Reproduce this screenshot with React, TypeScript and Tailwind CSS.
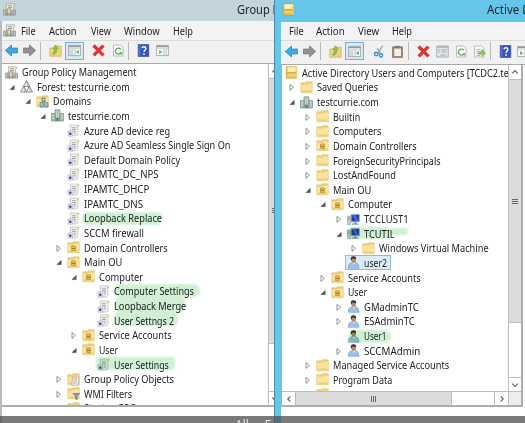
import React, { useLayoutEffect, useRef } from "react";

type Kind =
  | "gpm" | "forest" | "domains" | "domain" | "gpo" | "ou" | "folder" | "gpoFolder" | "wmi"
  | "book" | "pc" | "user";
type Node = {
  label: string;
  w: number;
  icon: Kind;
  depth: number;
  arrow?: "open" | "closed";
  selected?: boolean;
};

/* Condenses a label horizontally to its measured column width. */
function Label({ text, w, cls = "text-[11px]" }: { text: string; w: number; cls?: string }) {
  const ref = useRef<HTMLSpanElement>(null);
  useLayoutEffect(() => {
    const el = ref.current;
    if (el && el.offsetWidth) el.style.transform = `scaleX(${w / el.offsetWidth})`;
  }, [w]);
  return (
    <span className="flex h-[14px] shrink-0 items-center" style={{ width: w }}>
      <span ref={ref} className={"block shrink-0 origin-left whitespace-nowrap leading-[14px] " + cls}>{text}</span>
    </span>
  );
}

const Folder = () => (
  <>
    <path d="M.8 1.8h4.4l1-1h6v10.9H.8z" fill="#ecd07c" stroke="#dfbd65" strokeWidth=".6" />
    <path d="M1.2 3.8h5.4l1-1.1h4.6v8.8h-11z" fill="#f9e39e" />
    <path d="M1.6 10.4h10.2" stroke="#f0cd78" strokeWidth="1.8" />
  </>
);
const Building = () => (
  <>
    <path d="M4 .8h5V12H4z" fill="#a9b9bd" stroke="#7c8f94" strokeWidth=".7" />
    <path d="M.5 4.6H4V12H.5zM9 4.6h3.5V12H9z" fill="#a4c5ab" stroke="#76977f" strokeWidth=".7" />
    <path d="M5 3h1M7 3h1M5 5h1M7 5h1M5 7h1M7 7h1M1.8 6.6h1M10.3 6.6h1M1.8 9h1M10.3 9h1" stroke="#eef7fb" strokeWidth="1" />
    <path d="M5.4 9h2.2v3H5.4z" fill="#4e7c63" />
  </>
);

function Icon({ kind }: { kind: Kind }) {
  return (
    <svg viewBox="0 0 13 13" className="block h-[13px] w-[13px] shrink-0">
      {kind === "folder" && <Folder />}
      {kind === "ou" && (
        <>
          <Folder />
          <path d="M4.6 5h3.8v4.4H4.6z" fill="#f0c84e" stroke="#b08c35" strokeWidth=".8" />
          <path d="M5 7.4h3" stroke="#8d6b22" strokeWidth=".9" />
        </>
      )}
      {kind === "gpoFolder" && (
        <>
          <Folder />
          <path d="M5.5 4h6.6l-.8 8.2H4.8z" fill="#f3f1e6" stroke="#9a9788" strokeWidth=".6" />
          <path d="M6.6 6h3.6M6.5 8h3.4M6.3 10h3" stroke="#8f8f9a" strokeWidth=".7" />
        </>
      )}
      {kind === "wmi" && (
        <>
          <Folder />
          <path d="M6.2 6.5h6.3l-2.4 3v3.2l-1.5-.8V9.5z" fill="#7c9fc9" stroke="#48688f" strokeWidth=".6" />
        </>
      )}
      {kind === "domains" && (
        <>
          <Folder />
          <path d="M6 3h3v4H6z" fill="#90aab9" stroke="#5d7681" strokeWidth=".6" />
          <path d="M4 7.5h3.2v4.7H4zM8.6 7.5h3.4v4.7H8.6z" fill="#8fb7b8" stroke="#567a80" strokeWidth=".6" />
          <path d="M5 9h1M9.8 9h1M7 4.5h1" stroke="#eef7fb" />
        </>
      )}
      {kind === "domain" && <Building />}
      {kind === "forest" && (
        <g fill="#f4f4f4" stroke="#74787b" strokeWidth=".8">
          <path d="M6.5.6L9.6 6.5H3.4z" />
          <path d="M3.7 5.8L6.6 12H.5z" />
          <path d="M9.3 5.8L12.5 12H6.4z" />
          <path d="M6.5 1l1 5.4M3.7 6l1 6M9.3 6l1 6" strokeWidth=".5" />
        </g>
      )}
      {kind === "gpo" && (
        <>
          <path d="M3.4 1h8.4q.7 1.8-.9 2V10q-.2 1.9-1.8 1.9H2.2V9.6h1.2z" fill="#efefec" stroke="#b5b4ac" strokeWidth=".6" />
          <path d="M10 3.2V1.8q.5-1 1.7-.7.8 1.2-.6 2.1z" fill="#dbd09c" />
          <path d="M5 3.7h3.8M5 5.5h3.8M6.7 7.3h2.2M7 9.2h1.6" stroke="#9696a0" strokeWidth=".8" />
          <path d="M1 7h4.8v5H1z" fill="#e6e9f4" stroke="#a2a9be" strokeWidth=".6" />
          <path d="M2.2 10.8V8.6h2.2v2.2z" fill="#2e3d93" />
        </>
      )}
      {kind === "gpm" && (
        <>
          <path d="M3.4.8h8q1 1.8-.8 2.2v7.5H3.4z" fill="#f1eee0" stroke="#969487" strokeWidth=".6" />
          <path d="M5 2.8h4M5 4.6h4M5 6.4h3" stroke="#85858a" strokeWidth=".8" />
          <path d="M.7 7H5v5.1H.7zM7.2 7.2h5.3v4.9H7.2z" fill="#c3cacb" stroke="#7d858a" strokeWidth=".7" />
          <path d="M4.4 5.7h3.1v6.5H4.4z" fill="#e1d5a6" stroke="#8d8567" strokeWidth=".5" />
          <path d="M2 9h2M8.4 9.2h2.6M2 11h9" stroke="#6c747a" strokeWidth=".7" />
        </>
      )}
      {kind === "book" && (
        <>
          <path d="M1.2.8h10.4v11.4H1.2z" fill="#e6c04c" stroke="#bd9a40" strokeWidth=".6" />
          <path d="M2.4 1.2h8.2v5.1H2.4z" fill="#fbf0b6" />
          <path d="M2.4 6.9h8.4" stroke="#b08c33" strokeWidth=".8" />
          <path d="M2.4 7.6h8.2v2.9H2.4z" fill="#f2d165" />
          <path d="M11.2 1v10.8" stroke="#f8e59a" strokeWidth=".7" />
        </>
      )}
      {kind === "pc" && (
        <>
          <path d="M.6 3.2h3v8.5h-3z" fill="#c8d0d8" stroke="#87919c" strokeWidth=".6" />
          <path d="M1.2 5H3M1.2 6.7H3" stroke="#6e7e8c" strokeWidth=".6" />
          <path d="M4.1 1.4h8.3v7.4H4.1z" fill="#2140ad" stroke="#a5b6cf" strokeWidth=".8" />
          <path d="M5 2h3.4l3 6H9z" fill="#5375d6" opacity=".75" />
          <path d="M6.7 9.2h3v1.4h1.8v1.1H4.9v-1.1h1.8z" fill="#8b9cae" />
        </>
      )}
      {kind === "user" && (
        <>
          <path d="M1.2 12.3q-.4-4.2 3.1-5.6l4.7-.2q3.2 1.4 3 5.8z" fill="#9cc2e8" stroke="#6b9acb" strokeWidth=".6" />
          <path d="M5.2 6.5l1.9 2.2 1.3-2.2z" fill="#e7f1fa" />
          <path d="M4.2 3.6q0-3 2.6-3t2.2 3.2Q8.7 7 6.7 7T4.2 3.6z" fill="#b98a65" />
          <path d="M3.9 4.2Q3 .3 6.6.3q2.7 0 2.5 2.6-2.3.2-3.4-.7-.4 1-1 1.2v1.2z" fill="#40352e" />
        </>
      )}
    </svg>
  );
}

const Arrow = ({ state }: { state?: "open" | "closed" }) => (
  <svg viewBox="0 0 6 8" className="mr-[5px] block h-2 w-1.5 shrink-0">
    {state === "open" && <path d="M5.2 2.4v4.2H1z" fill="#555" stroke="#3c3c3c" strokeWidth=".5" />}
    {state === "closed" && <path d="M1 1.4v6l3.4-3z" fill="#fff" stroke="#777" strokeWidth=".8" />}
  </svg>
);

const INDENT = ["w-0", "w-[4px]", "w-[19.5px]", "w-[35px]", "w-[50.5px]", "w-[66px]"];

function Tree({ nodes }: { nodes: Node[] }) {
  return (
    <div className="flex flex-col">
      {nodes.map((n, i) => (
        <div key={i} className="flex h-[14.63px] shrink-0 items-center">
          <span className={"shrink-0 " + INDENT[n.depth]} />
          {n.depth > 0 && <Arrow state={n.arrow} />}
          {n.selected ? (
            <div className="-ml-[2px] flex h-[15px] items-center border border-[#8fb9dd] bg-[#dcebf8] pr-[3px]">
              <span className="w-px shrink-0" />
              <Icon kind={n.icon} />
              <span className="w-1 shrink-0" />
              <Label text={n.label} w={n.w} />
            </div>
          ) : (
            <>
              <Icon kind={n.icon} />
              <span className="w-1 shrink-0" />
              <Label text={n.label} w={n.w} />
            </>
          )}
        </div>
      ))}
    </div>
  );
}

const gpmNodes: Node[] = [
  { label: "Group Policy Management", w: 115, icon: "gpm", depth: 0 },
  { label: "Forest: testcurrie.com", w: 93, icon: "forest", depth: 1, arrow: "open" },
  { label: "Domains", w: 38, icon: "domains", depth: 2, arrow: "open" },
  { label: "testcurrie.com", w: 62, icon: "domain", depth: 3, arrow: "open" },
  { label: "Azure AD device reg", w: 86, icon: "gpo", depth: 4 },
  { label: "Azure AD Seamless Single Sign On", w: 146, icon: "gpo", depth: 4 },
  { label: "Default Domain Policy", w: 96, icon: "gpo", depth: 4 },
  { label: "IPAMTC_DC_NPS", w: 75, icon: "gpo", depth: 4 },
  { label: "IPAMTC_DHCP", w: 65, icon: "gpo", depth: 4 },
  { label: "IPAMTC_DNS", w: 59, icon: "gpo", depth: 4 },
  { label: "Loopback Replace", w: 78, icon: "gpo", depth: 4 },
  { label: "SCCM firewall", w: 60, icon: "gpo", depth: 4 },
  { label: "Domain Controllers", w: 84, icon: "ou", depth: 4, arrow: "closed" },
  { label: "Main OU", w: 38, icon: "ou", depth: 4, arrow: "open" },
  { label: "Computer", w: 44, icon: "ou", depth: 5, arrow: "open" },
];
const gpmInner: Node[] = [
  { label: "Computer Settings", w: 80, icon: "gpo", depth: 5 },
  { label: "Loopback Merge", w: 72, icon: "gpo", depth: 5 },
  { label: "User Settngs 2", w: 60, icon: "gpo", depth: 5 },
];
const gpmAfter: Node[] = [
  { label: "Service Accounts", w: 73, icon: "ou", depth: 5, arrow: "closed" },
  { label: "User", w: 19, icon: "ou", depth: 5, arrow: "open" },
];
const gpmUser: Node[] = [{ label: "User Settings", w: 55, icon: "gpo", depth: 5 }];
const gpmEnd: Node[] = [
  { label: "Group Policy Objects", w: 90, icon: "gpoFolder", depth: 4, arrow: "closed" },
  { label: "WMI Filters", w: 48, icon: "wmi", depth: 4, arrow: "closed" },
  { label: "Starter GPOs", w: 58, icon: "gpoFolder", depth: 4 },
];

const adNodes: Node[] = [
  { label: "Active Directory Users and Computers [TCDC2.testcurrie.com]", w: 263, icon: "book", depth: 0 },
  { label: "Saved Queries", w: 61, icon: "folder", depth: 1, arrow: "closed" },
  { label: "testcurrie.com", w: 62, icon: "domain", depth: 1, arrow: "open" },
  { label: "Builtin", w: 27, icon: "folder", depth: 2, arrow: "closed" },
  { label: "Computers", w: 48, icon: "folder", depth: 2, arrow: "closed" },
  { label: "Domain Controllers", w: 84, icon: "ou", depth: 2, arrow: "closed" },
  { label: "ForeignSecurityPrincipals", w: 108, icon: "folder", depth: 2, arrow: "closed" },
  { label: "LostAndFound", w: 63, icon: "folder", depth: 2, arrow: "closed" },
  { label: "Main OU", w: 38, icon: "ou", depth: 2, arrow: "open" },
  { label: "Computer", w: 44, icon: "ou", depth: 3, arrow: "open" },
  { label: "TCCLUST1", w: 45, icon: "pc", depth: 4, arrow: "closed" },
  { label: "TCUTIL", w: 31, icon: "pc", depth: 4, arrow: "open" },
  { label: "Windows Virtual Machine", w: 110, icon: "folder", depth: 5, arrow: "closed" },
  { label: "user2", w: 23, icon: "user", depth: 4, selected: true },
  { label: "Service Accounts", w: 73, icon: "ou", depth: 3, arrow: "closed" },
  { label: "User", w: 19, icon: "ou", depth: 3, arrow: "open" },
  { label: "GMadminTC", w: 55, icon: "user", depth: 4, arrow: "closed" },
  { label: "ESAdminTC", w: 51, icon: "user", depth: 4, arrow: "closed" },
  { label: "User1", w: 22, icon: "user", depth: 4 },
  { label: "SCCMAdmin", w: 56, icon: "user", depth: 4, arrow: "closed" },
  { label: "Managed Service Accounts", w: 116, icon: "folder", depth: 2, arrow: "closed" },
  { label: "Program Data", w: 59, icon: "folder", depth: 2, arrow: "closed" },
  { label: "System", w: 32, icon: "folder", depth: 2 },
];

type ToolKind = "back" | "fwd" | "up" | "pane" | "cut" | "paste" | "del" | "props" | "refresh" | "export" | "help" | "view";
const Sheet = () => <path d="M1.5 1h7L11 3.4V12H1.5z" fill="#fafafa" stroke="#a5a5a5" strokeWidth=".7" />;
function Tool({ kind }: { kind: ToolKind }) {
  const arrow = "M6.5 1v3.1h6.2v4.8H6.5V12L.4 6.5z";
  return (
    <svg viewBox="0 0 13 13" className="block h-[13px] w-[13px] shrink-0">
      {kind === "back" && <path d={arrow} fill="#3dabe8" stroke="#2f82b8" strokeWidth=".8" />}
      {kind === "fwd" && <path d={arrow} transform="matrix(-1 0 0 1 13 0)" fill="#929292" stroke="#777" strokeWidth=".8" />}
      {kind === "up" && (
        <>
          <path d="M.8 4h4.4l1-1.8h6v10H.8z" fill="#efd47c" stroke="#cfae58" strokeWidth=".7" />
          <path d="M4.6 10.6q3.8-1.9 3.1-6.1l1.7.2L6.6.8 3.6 4.6l1.9-.2q.4 3.1-2 5.4z" fill="#8cc05a" stroke="#6f9a45" strokeWidth=".5" />
        </>
      )}
      {(kind === "pane" || kind === "view") && (
        <>
          <path d="M.4 1.4h12.2v10.2H.4z" fill="#f7f8f8" stroke="#8d9296" strokeWidth=".7" />
          <path d="M.7 2.5h11.6" stroke="#93989c" strokeWidth="1.5" />
          <path d="M.7 4.6h11.6" stroke="#c2c6c9" strokeWidth=".7" />
          {kind === "pane" ? (
            <>
              <path d="M4.2 5v6.6M7 5v6.6" stroke="#a3a8ac" strokeWidth=".7" />
              <path d="M1.3 6.4h2M1.3 8.2h2M1.3 10h2" stroke="#979ca0" strokeWidth=".8" />
              <path d="M10.9 6v4.2L7.9 8.1z" fill="#5bb25e" />
            </>
          ) : (
            <>
              <path d="M8 5v6.6M10.3 5v6.6" stroke="#a3a8ac" strokeWidth=".7" />
              <path d="M3.2 6v4.2l3-2.1z" fill="#5bb25e" />
            </>
          )}
        </>
      )}
      {kind === "cut" && (
        <>
          <path d="M9.6.6L5 8.6M4.2 3.2l3.4 5.6" stroke="#8aa7bc" strokeWidth="1.3" />
          <circle cx="3.2" cy="9" r="1.7" fill="none" stroke="#3a8fcf" strokeWidth="1.4" />
          <circle cx="8" cy="10.4" r="1.6" fill="none" stroke="#3a8fcf" strokeWidth="1.4" />
        </>
      )}
      {kind === "paste" && (
        <>
          <path d="M1.6 1.8h9.8v10.6H1.6z" fill="#a08468" stroke="#7c6750" strokeWidth=".7" />
          <path d="M3.2 3.5H10v7.6H3.2z" fill="#f0efee" />
          <path d="M4.4.8h4.2v2.4H4.4z" fill="#777" />
        </>
      )}
      {kind === "del" && (
        <path d="M2.7.6l3.9 3.7L10.3.8l2 2-3.7 3.7 3.8 3.7-2.1 2-3.7-3.7-3.8 3.7-2-2 3.7-3.7L.7 2.8z" fill="#dd3535" stroke="#c03535" strokeWidth=".5" />
      )}
      {kind === "props" && (
        <>
          <path d="M.8 1h11.4v11H.8z" fill="#e6e9ed" stroke="#929ba5" strokeWidth=".8" />
          <path d="M1.4 2.2h10.2" stroke="#9faab6" strokeWidth="1.2" />
          <path d="M2.3 4.8h2M5.5 4.8h5M2.3 7h2M5.5 7h5M4 10h6" stroke="#9ba5af" strokeWidth="1" />
        </>
      )}
      {kind === "refresh" && (
        <>
          <Sheet />
          <path d="M8.8 5.2A3 3 0 1 0 9.1 8.6" fill="none" stroke="#5cb061" strokeWidth="1.4" />
          <path d="M10.3 7.8l-.3 3-2.6-1.7z" fill="#5cb061" />
        </>
      )}
      {kind === "export" && (
        <>
          <Sheet />
          <path d="M3.4 4.5h4M3.4 6.5h2M3.4 8.5h2M3.4 10.5h4" stroke="#b4a574" strokeWidth=".8" />
          <path d="M5.5 6.4h3.3V4.3L12.7 8l-3.9 3.3V9.2H5.5z" fill="#84c55f" stroke="#69a84d" strokeWidth=".4" />
        </>
      )}
      {kind === "help" && (
        <>
          <path d="M1.2.5h10.6v12H1.2z" fill="#3355b8" stroke="#2d4690" strokeWidth=".6" />
          <path d="M2.7.8v11.4" stroke="#718bd2" strokeWidth=".8" />
          <path d="M5 4.2Q5.2 2.7 7 2.7t1.9 1.7c0 1.6-1.9 1.5-1.9 3.6" fill="none" stroke="#fff" strokeWidth="1.4" />
          <path d="M6.2 9.2h1.6v1.5H6.2z" fill="#fff" />
        </>
      )}
    </svg>
  );
}
const Sep = () => <span className="h-[18px] w-px shrink-0 bg-[#b8b8b8]" />;
const PaneButton = () => (
  <div className="flex h-[18px] w-[19px] shrink-0 items-center justify-center border border-[#73b0d4] bg-[#d6eaf5]">
    <Tool kind="pane" />
  </div>
);
const Chevron = ({ dir }: { dir: "up" | "down" | "left" | "right" }) => (
  <svg viewBox="0 0 8 8" className="block h-2 w-2 shrink-0" fill="none" stroke="#666" strokeWidth="1.2">
    {dir === "up" && <path d="M1.2 5.4L4 2.6l2.8 2.8" />}
    {dir === "down" && <path d="M1.2 2.6L4 5.4l2.8-2.8" />}
    {dir === "left" && <path d="M5.4 1.4L2.8 4l2.6 2.6" />}
    {dir === "right" && <path d="M2.6 1.4L5.2 4 2.6 6.6" />}
  </svg>
);
const GripV = () => (
  <div className="flex w-[6px] shrink-0 flex-col gap-px">
    <span className="h-px bg-[#666]" /><span className="h-px bg-[#666]" /><span className="h-px bg-[#666]" />
  </div>
);

/* Translucent marker strokes laid over the tree labels. */
function Marker({ cls }: { cls: string }) {
  return <span className={"pointer-events-none absolute bg-[#d0efd4] mix-blend-multiply blur-[0.8px] " + cls} />;
}

export default function App() {
  return (
    <div className="relative flex h-[423px] w-[525px] overflow-hidden bg-white font-['Noto_Sans','Open_Sans',sans-serif] text-[#232328]">
      <section className="flex w-[274px] shrink-0 flex-col overflow-hidden">
        <header className="flex h-[21px] shrink-0 items-center bg-[#c3d4dc] pb-[2px] pl-[3px]">
          <Icon kind="gpm" />
          <div className="w-[221px] shrink-0" />
          <Label text="Group Policy Management" w={138} cls="text-[12px]" />
        </header>
        <div className="flex min-h-0 flex-1 flex-col border-l-2 border-[#b4bdc1] bg-white">
          <nav className="flex h-[19px] shrink-0 items-center bg-[#f3f3f4] pl-px">
            <Icon kind="gpm" />
            <span className="w-[5px]" />
            <Label text="File" w={15} /><span className="w-[13px]" />
            <Label text="Action" w={28} /><span className="w-[14px]" />
            <Label text="View" w={20} /><span className="w-[13px]" />
            <Label text="Window" w={36} /><span className="w-[13px]" />
            <Label text="Help" w={20} />
          </nav>
          <div className="flex h-[24px] shrink-0 items-center border-t border-b border-t-[#dcdcdc] border-b-[#a9a9a9] bg-[#f1f1f1] pb-[3px] pl-[3px]">
            <Tool kind="back" /><span className="w-[5px]" /><Tool kind="fwd" />
            <span className="w-1" /><Sep /><span className="w-[8px]" />
            <Tool kind="up" /><span className="w-[3px]" /><PaneButton />
            <span className="w-2" /><Tool kind="del" /><span className="w-[7px]" /><Tool kind="refresh" />
            <span className="w-[3px]" /><Sep /><span className="w-2" />
            <Tool kind="help" /><span className="w-[6px]" /><Tool kind="view" />
          </div>
          <div className="flex h-[343px] shrink-0 border-b-2 border-[#aaaeb1]">
            <div className="relative h-[341px] min-w-0 flex-1 overflow-hidden pt-[0.7px] pl-[3px]">
              <Tree nodes={gpmNodes} />
              <div className="pl-[15px]"><Tree nodes={gpmInner} /></div>
              <Tree nodes={gpmAfter} />
              <div className="pl-[15px]"><Tree nodes={gpmUser} /></div>
              <Tree nodes={gpmEnd} />
              <Marker cls="left-[80px] top-[148px] h-[13px] w-[80px] rounded-[5px]" />
              <Marker cls="left-[112px] top-[220px] h-[13px] w-[86px] rounded-[6px]" />
              <Marker cls="left-[113px] top-[233px] h-[15px] w-[70px] rounded-[5px]" />
              <Marker cls="left-[112px] top-[248px] h-[14px] w-[64px] rounded-[5px]" />
              <Marker cls="left-[94px] top-[293px] h-[13px] w-[79px] rounded-[4px]" />
            </div>
            <div className="flex w-[6px] shrink-0 flex-col overflow-hidden border-l border-[#bdbdbd] bg-white">
              <div className="flex h-[15px] shrink-0 items-center border-b border-[#bdbdbd] pl-[2px]"><Chevron dir="up" /></div>
              <div className="flex h-[265px] shrink-0 items-center border-b border-[#bdbdbd] bg-[#dadada] pb-[1px] pl-[3px]"><GripV /></div>
              <div className="flex-1" />
              <div className="flex h-[14px] shrink-0 items-center border-t border-[#bdbdbd] pl-[2px]"><Chevron dir="down" /></div>
            </div>
          </div>
        </div>
      </section>

      <section className="flex min-w-0 flex-1 flex-col overflow-hidden border-l border-[#4e8aa2] bg-[#66c6e9]">
        <header className="flex h-[22px] shrink-0 items-center pb-[3px] pl-[7px]">
          <Icon kind="book" />
          <div className="w-[192px] shrink-0" />
          <Label text="Active Directory Users and Computers" w={205} cls="text-[12px]" />
        </header>
        <div className="ml-[6px] flex min-h-0 flex-1 flex-col bg-white">
          <nav className="flex h-[18px] shrink-0 items-center bg-[#f3f3f4] pl-[8px]">
            <Label text="File" w={15} /><span className="w-[12px]" />
            <Label text="Action" w={29} /><span className="w-[13px]" />
            <Label text="View" w={21} /><span className="w-[13px]" />
            <Label text="Help" w={20} />
          </nav>
          <div className="flex h-[25px] shrink-0 items-center border-t border-b border-t-[#dcdcdc] border-b-[#a9a9a9] bg-[#f1f1f1] pb-[3px] pl-[4px]">
            <Tool kind="back" /><span className="w-[5px] shrink-0" /><Tool kind="fwd" />
            <span className="w-1 shrink-0" /><Sep /><span className="w-[8px] shrink-0" />
            <Tool kind="up" /><span className="w-[3px] shrink-0" /><PaneButton />
            <span className="w-[9px] shrink-0" /><Tool kind="cut" />
            <span className="w-[5px] shrink-0" /><Tool kind="paste" />
            <span className="w-[4px] shrink-0" /><Sep /><span className="w-[8px] shrink-0" />
            <Tool kind="del" /><span className="w-[6px] shrink-0" /><Tool kind="props" />
            <span className="w-[6px] shrink-0" /><Tool kind="refresh" />
            <span className="w-[5px] shrink-0" /><Tool kind="export" />
            <span className="w-[4px] shrink-0" /><Sep /><span className="w-[8px] shrink-0" />
            <Tool kind="help" /><span className="w-[5px] shrink-0" /><Tool kind="view" />
          </div>
          <div className="flex h-[342px] w-[242px] shrink-0 flex-col border-r-2 border-b-2 border-l border-[#aaaeb1]">
            <div className="flex h-[326px] shrink-0">
              <div className="relative h-[326px] min-w-0 flex-1 overflow-hidden pt-[0.5px] pl-[3px]">
                <Tree nodes={adNodes} />
                <Marker cls="left-[64px] top-[162px] h-[12px] w-[46px] rounded-[6px]" />
                <Marker cls="left-[109px] top-[163px] h-[7px] w-[17px] rounded-[3px]" />
                <Marker cls="left-[66px] top-[265px] h-[13px] w-[43px] rounded-[7px]" />
              </div>
              <div className="flex w-[13px] shrink-0 flex-col border-l border-[#bdbdbd] bg-white">
                <div className="flex h-[15px] shrink-0 items-center justify-center border-b border-[#bdbdbd]"><Chevron dir="up" /></div>
                <div className="flex h-[243px] shrink-0 items-center justify-center border-b border-[#bdbdbd] bg-[#dcdcdd]"><GripV /></div>
                <div className="flex-1" />
                <div className="flex h-[14px] shrink-0 items-center justify-center border-t border-[#bdbdbd]"><Chevron dir="down" /></div>
              </div>
            </div>
            <div className="flex h-[14px] shrink-0 border-t border-[#bdbdbd] bg-white">
              <div className="flex w-[14px] items-center justify-center border-r border-[#bdbdbd]"><Chevron dir="left" /></div>
              <div className="flex w-[156px] items-center justify-center gap-px border-r border-[#bdbdbd] bg-[#dcdcdd]">
                <span className="h-[6px] w-px bg-[#666]" /><span className="h-[6px] w-px bg-[#666]" /><span className="h-[6px] w-px bg-[#666]" />
              </div>
              <div className="flex-1" />
              <div className="flex w-[14px] items-center justify-center border-l border-[#bdbdbd]"><Chevron dir="right" /></div>
              <div className="w-[13px] border-l border-[#bdbdbd] bg-[#eeeeee]" />
            </div>
          </div>
        </div>
      </section>
      <footer className="absolute inset-x-0 bottom-0 h-[7px] overflow-hidden bg-[#4f4f4f]/75">
        <span className="absolute left-[235px] top-[2px] whitespace-nowrap text-[12px] leading-[14px] text-white/80">All . . E</span>
      </footer>
    </div>
  );
}
